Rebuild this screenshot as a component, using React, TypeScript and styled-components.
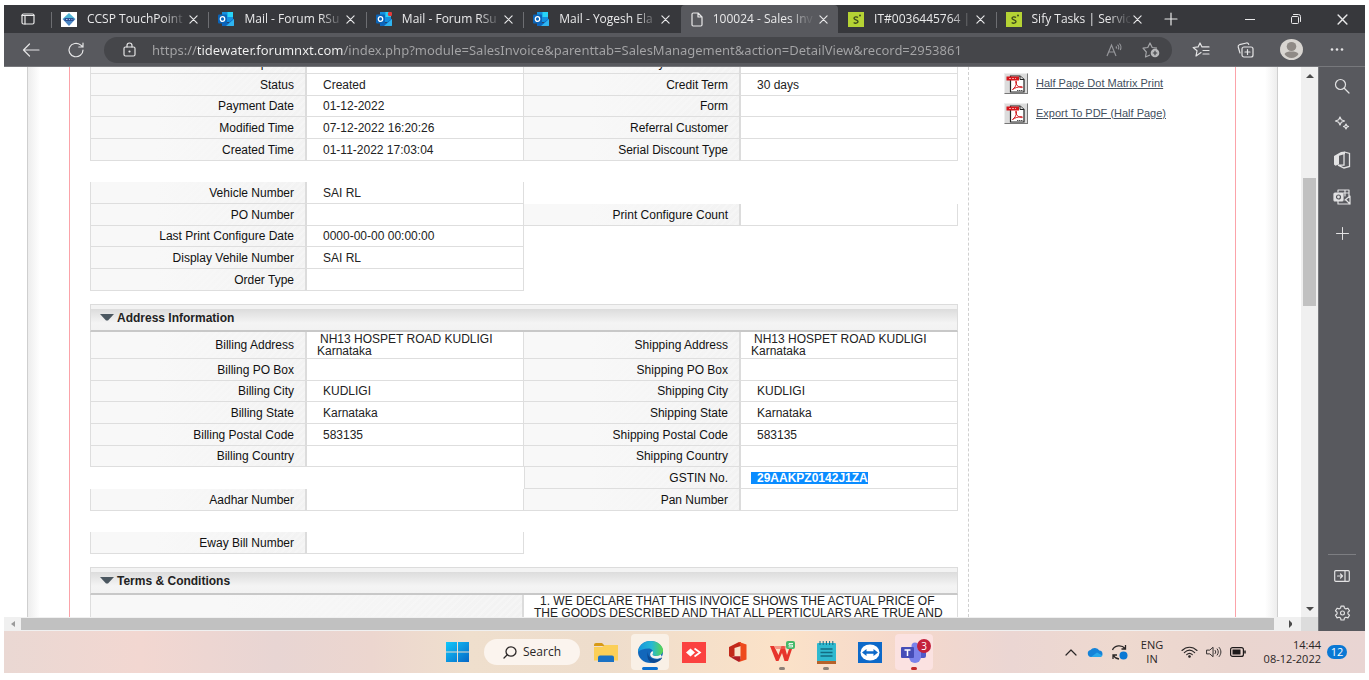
import React from "react";
import styled, { createGlobalStyle, css } from "styled-components";

const GlobalStyle = createGlobalStyle`
  * { box-sizing: border-box; }
  body { margin: 0; background: #fff; font-family: "Liberation Sans", Arial, sans-serif; }
  button { border: 0; padding: 0; background: none; color: inherit; font: inherit; }
`;

const uiFont = `"Open Sans", "Noto Sans", sans-serif`;

/* ---------- window shell ---------- */

const Desktop = styled.div`
  height: 100vh;
  padding: 5px 4px 7px;
  display: flex;
  flex-direction: column;
`;

const Center = css`
  display: flex;
  align-items: center;
  justify-content: center;
`;

const TitleBar = styled.header`
  flex: 0 0 28px;
  display: flex;
  background: #37383c;
  color: #e9e9ea;
  font: 12px/20px ${uiFont};
`;

const TabActions = styled.button`
  flex: 0 0 47px;
  ${Center}
`;

const Tabs = styled.nav`
  flex: 0 1 1102px;
  min-width: 0;
  display: flex;
`;

const Tab = styled.div<{ $active?: boolean; $quiet?: boolean }>`
  flex: 1 1 0;
  min-width: 0;
  display: flex;
  align-items: center;
  gap: 10px;
  padding: 0 9px 0 10px;
  position: relative;
  border-radius: 4px 4px 0 0;
  background: ${(p) => (p.$active ? "#58595e" : "transparent")};
  &::before {
    content: "";
    position: absolute;
    left: 0;
    top: 7px;
    height: 16px;
    width: 1px;
    background: ${(p) => (p.$active || p.$quiet ? "transparent" : "#6d6e72")};
  }
`;

const TabTitle = styled.span`
  flex: 1;
  min-width: 0;
  margin-right: -8px;
  overflow: hidden;
  white-space: nowrap;
  mask-image: linear-gradient(to right, #000 76px, rgba(0, 0, 0, 0.15) 96px);
`;

const TabClose = styled.button`
  flex: 0 0 12px;
  height: 20px;
  ${Center}
`;

const NewTab = styled.button`
  flex: 0 0 35px;
  ${Center}
`;

const WindowButtons = styled.div`
  margin-left: auto;
  display: flex;
`;

const WindowButton = styled.button`
  width: 46px;
  ${Center}
`;

const Toolbar = styled.div`
  flex: 0 0 34px;
  display: flex;
  align-items: center;
  padding-right: 12px;
  background: #58595e;
  color: #e4e4e5;
  border-bottom: 1px solid #77787c;
`;

const ToolButton = styled.button<{ $w?: number }>`
  width: ${(p) => p.$w ?? 45}px;
  height: 28px;
  ${Center}
`;

const AddressBar = styled.div`
  flex: 1;
  min-width: 0;
  height: 26px;
  margin-left: 10px;
  padding: 0 3px 0 18px;
  border-radius: 13px;
  background: #45464a;
  display: flex;
  align-items: center;
`;

const UrlInput = styled.input`
  flex: 1;
  min-width: 0;
  height: 24px;
  margin-left: 15px;
  padding: 0;
  border: 0;
  outline: 0;
  font: 13px/24px "Noto Sans", "Open Sans", sans-serif;
  background: linear-gradient(to right, #a5a5a7 46px, #f4f4f4 46px, #f4f4f4 192px, #a5a5a7 192px);
  background-clip: text;
  -webkit-background-clip: text;
  -webkit-text-fill-color: transparent;
`;

const Browser = styled.div`
  flex: 1;
  min-height: 0;
  display: flex;
`;

const Frame = styled.div`
  flex: 1;
  min-width: 0;
  display: flex;
  flex-direction: column;
`;

const FrameBody = styled.div`
  flex: 1;
  min-height: 0;
  display: flex;
`;

const Viewport = styled.main`
  flex: 1;
  min-width: 0;
  overflow: hidden;
  padding: 0 23px;
  background: #fff;
`;

/* ---------- scrollbars ---------- */

const VTrack = styled.div`
  flex: 0 0 17px;
  background: #f0f0f0;
  display: flex;
  flex-direction: column;
  align-items: center;
`;

const VThumb = styled.div`
  width: 13px;
  height: 128px;
  margin-top: 94px;
  background: #c1c1c1;
`;

const HTrack = styled.div`
  flex: 0 0 14px;
  display: flex;
  align-items: center;
  background: #f0f0f0;
`;

const HThumb = styled.div`
  flex: 1;
  height: 12px;
  background: #c1c1c1;
`;

const ScrollArrow = styled.button<{ $w: number; $h: number; $end?: boolean }>`
  width: ${(p) => p.$w}px;
  height: ${(p) => p.$h}px;
  margin-top: ${(p) => (p.$end ? "auto" : "0")};
  ${Center}
`;

const Corner = styled.div`
  width: 17px;
  height: 14px;
  background: #dcdcdc;
`;

/* ---------- edge sidebar ---------- */

const SideRail = styled.aside`
  flex: 0 0 47px;
  border-left: 1px solid #77787c;
  background: #58595e;
  color: #e2e2e3;
  display: flex;
  flex-direction: column;
  align-items: center;
`;

const RailButton = styled.button`
  width: 36px;
  height: 37px;
  ${Center}
`;

const RailDivider = styled.hr`
  width: 28px;
  margin: auto 0 2px;
  border: 0;
  border-top: 1px solid #7d7e82;
`;

/* ---------- invoice page ---------- */

const Sheet = styled.div`
  height: 100%;
  border-left: 1px solid #cfcfcf;
  border-right: 1px solid #cfcfcf;
  padding: 0 41px;
  background:
    linear-gradient(to right, #ededed, #fff) left / 12px 100% no-repeat,
    linear-gradient(to left, #ededed, #fff) right / 12px 100% no-repeat;
`;

const Inner = styled.div`
  height: 100%;
  display: flex;
  border-left: 1px solid #fba3a9;
  border-right: 1px solid #fba3a9;
`;

const Details = styled.div`
  flex: 1;
  min-width: 0;
  height: 100%;
  overflow: hidden;
  padding: 0 10px 0 20px;
  border-right: 1px dashed #cfcfcf;
`;

const Scrolled = styled.div`
  margin-top: -15px;
`;

const Actions = styled.div`
  flex: 0 0 266px;
  padding: 6px 0 0 35px;
  display: flex;
  flex-direction: column;
  gap: 9px;
`;

const ActionRow = styled.div`
  display: flex;
  align-items: center;
  gap: 8px;
  height: 21px;
`;

const PdfButton = styled.button`
  width: 24px;
  height: 21px;
  background: #dcdcdc;
  border: 1px solid #eee;
  border-right-color: #777;
  border-bottom-color: #777;
  ${Center}
`;

const ActionLink = styled.a`
  padding-bottom: 2px;
  font-size: 11px;
  line-height: 14px;
  color: #44505e;
  text-decoration: underline;
`;

const Block = styled.table`
  width: 100%;
  table-layout: fixed;
  border-collapse: separate;
  border-spacing: 0;
  font-size: 12px;
  line-height: 12px;
  color: #222;
`;

const LabelCol = styled.col`
  width: calc(25% + 1px);
`;

const ValueCol = styled.col`
  width: calc(25% - 1px);
`;

const BlockRow = styled.tr<{ $tall?: boolean }>`
  height: ${(p) => (p.$tall ? 27 : 22)}px;
  &:nth-child(3n) {
    height: 21px;
  }
`;

const LabelCell = styled.th<{ $first?: boolean }>`
  padding: 0 11px 0 0;
  text-align: right;
  font-weight: normal;
  color: #111;
  border-bottom: 1px solid #dedede;
  border-right: 2px solid #dcdcdc;
  border-left: ${(p) => (p.$first ? "1px solid #dedede" : "0")};
  background:
    linear-gradient(to right, #f8f8f8 30%, rgba(246, 246, 246, 0.6)),
    repeating-linear-gradient(135deg, #ededed 0 3px, #f4f4f4 3px 5px);
`;

const ValueCell = styled.td<{ $inline?: boolean }>`
  padding: 0 10px;
  border-bottom: 1px solid #dedede;
  border-right: 1px solid #dedede;
  text-indent: ${(p) => (p.$inline ? 3 : 6)}px;
  &:has(strong) {
    text-indent: 0;
  }
`;

const BlankCell = styled.td`
  padding: 0;
`;

const Selected = styled.strong`
  display: inline-block;
  text-indent: 6px;
  color: #fff;
  background: #0a8cff;
`;

const SectionHead = styled.h2`
  height: 28px;
  margin: 13px 0 0;
  padding: 0 0 0 9px;
  display: flex;
  align-items: center;
  gap: 3px;
  font-size: 12px;
  line-height: 14px;
  color: #222;
  border: 1px solid #dcdcdc;
  border-bottom: 2px solid #c8c8c8;
  background: linear-gradient(#f3f3f3 4px, #dcdcdc 4px, #f4f4f4 18px, #f2f2f2);
`;

/* ---------- taskbar ---------- */

const Taskbar = styled.footer`
  flex: 0 0 42px;
  display: grid;
  grid-template-columns: 1fr auto 1fr;
  align-items: center;
  color: #2a2626;
  font: 11px/14px ${uiFont};
  background: linear-gradient(
    to right,
    #ead8d3 0%,
    #f2d7d1 10%,
    #e8d5d3 20%,
    #ecd6cf 27%,
    #efdfcd 34%,
    #eeddcc 44%,
    #fbe2c8 57%,
    #f5d8cb 66%,
    #ebd6d3 74%,
    #eed9cf 82%,
    #ead5cf 90%,
    #e9d5d3 100%
  );
`;

const Launcher = styled.div`
  grid-column: 2;
  padding-left: 2px;
  display: flex;
  align-items: center;
`;

const TaskButton = styled.button<{ $bg?: string; $mark?: string; $wide?: boolean }>`
  width: 38px;
  height: 36px;
  margin: 0 3px;
  position: relative;
  border-radius: 4px;
  background: ${(p) => p.$bg ?? "transparent"};
  ${Center}
  &::after {
    content: "";
    position: absolute;
    bottom: 0;
    left: 50%;
    width: ${(p) => (p.$wide ? 16 : 6)}px;
    height: 3px;
    border-radius: 2px;
    transform: translateX(-50%);
    background: ${(p) => p.$mark ?? "transparent"};
  }
`;

const SearchPill = styled.button`
  width: 96px;
  height: 26px;
  margin: 0 4px 0 5px;
  gap: 6px;
  border-radius: 13px;
  background: #fbf4ee;
  font-size: 12px;
  ${Center}
`;

const Count = styled.span`
  position: absolute;
  top: 5px;
  right: 2px;
  width: 14px;
  height: 14px;
  border-radius: 7px;
  background: #c4213c;
  color: #fff;
  font-size: 10px;
  ${Center}
`;

const Tray = styled.div`
  justify-self: end;
  grid-column: 3;
  display: flex;
  align-items: center;
  margin-right: 18px;
`;

const TrayButton = styled.button<{ $w?: number }>`
  width: ${(p) => p.$w ?? 24}px;
  height: 28px;
  ${Center}
`;

const Clock = styled.time`
  width: 67px;
  text-align: right;
`;

const Notice = styled.span`
  width: 20px;
  height: 14px;
  margin-left: 6px;
  border-radius: 7px;
  background: #0a78d4;
  color: #fff;
  ${Center}
`;

/* ---------- drawings ---------- */

const Line = ({ w = 18, h = w, vb = "0 0 20 20", s = 1.2, children }: any) => (
  <svg width={w} height={h} viewBox={vb} fill="none" stroke="currentColor" strokeWidth={s} strokeLinecap="round" strokeLinejoin="round" aria-hidden>
    {children}
  </svg>
);

const Cross = ({ size = 9 }: { size?: number }) => (
  <Line w={size} vb="0 0 10 10" s={1.3}><path d="M1 1l8 8M9 1l-8 8" /></Line>
);

const OutlookIcon = ({ dot }: { dot?: boolean }) => (
  <svg width="16" height="14" viewBox="0 0 16 14" aria-hidden>
    <rect x="4" y="0" width="11" height="10" fill="#1490df" />
    <path d="M9.500 0H15v5H9.500z" fill="#28d4f8" />
    <path d="M4 7l6 4 6-4.500V14H4z" fill="#0d65bd" />
    <path d="M8 14l8-7v6.500l-.5.5z" fill="#2fb4f0" />
    <rect x="0" y="2.500" width="9" height="9" rx="1" fill="#0a64b8" />
    <ellipse cx="4.500" cy="7" rx="2.200" ry="2.400" fill="none" stroke="#fff" strokeWidth="1.300" />
    {dot && <circle cx="14" cy="2" r="2.200" fill="#e23b3b" />}
  </svg>
);

const SifyIcon = () => (
  <svg width="16" height="15" viewBox="0 0 16 15" aria-hidden>
    <rect width="16" height="15" fill="#b5d334" />
    <path d="M10 5.500C9 4.600 6 4.500 6 6.300c0 1.900 4 1.200 4 3.300 0 2-3.200 1.900-4.300.9" fill="none" stroke="#3d4a1d" strokeWidth="1.400" />
    <circle cx="12" cy="3.500" r="1" fill="#3d4a1d" />
  </svg>
);

const CcspIcon = () => (
  <svg width="16" height="15" viewBox="0 0 16 15" aria-hidden>
    <rect width="16" height="15" fill="#fff" />
    <path d="M8 1l6.500 6H1.500z" fill="#4db3d3" />
    <path d="M8 14L1.500 7h13z" fill="#4a86c4" />
    <path d="M3.500 7.500h9" stroke="#2b4f94" strokeWidth="3" />
    <path d="M5 7.500h1.500M8 7.500h1M10.500 7.500h.8" stroke="#a9c5e8" strokeWidth="1" />
  </svg>
);

const PageIcon = () => (
  <Line w={12} h={15} vb="0 0 12 15" s={1.2}><path d="M1 2.200C1 1.500 1.500 1 2.200 1H7l4 4v7.800c0 .7-.5 1.200-1.200 1.200H2.200C1.500 14 1 13.500 1 12.800zM7 1v4h4" /></Line>
);

const PdfIcon = () => (
  <svg width="20" height="18" viewBox="0 0 20 18" aria-hidden>
    <path d="M4.500 1H14l4 3.500V17H4.500z" fill="#fff" stroke="#222" strokeWidth="1.200" />
    <path d="M14 1v3.500h4" fill="#ddd" stroke="#222" />
    <rect x="0.500" y="1.500" width="12.500" height="4" fill="#d5161c" />
    <path d="M3 3.500h7" stroke="#f5a4a4" strokeDasharray="2 1" />
    <path d="M6.500 14.500c2-1 4.500-5 4-8-.2-.7-.9-.6-.9.1 0 3 3.200 6 6.200 6 .9 0 .8-1-.2-1-3 0-7 1.300-9.100 2.900" fill="none" stroke="#d5161c" />
    <path d="M11 15.500h6" stroke="#555" strokeDasharray="1.500 .5" />
  </svg>
);

const Triangle = () => (
  <svg width="14" height="7" viewBox="0 0 14 7" aria-hidden><path d="M0 0h14L8 6.500H6z" fill="#4b5760" /></svg>
);

const Arrow = ({ d, dim }: { d: string; dim?: boolean }) => (
  <svg width="8" height="8" viewBox="0 0 8 8" aria-hidden><path d={d} fill={dim ? "#9a9a9a" : "#4c4c4c"} /></svg>
);

/* ---------- data ---------- */

type Pair = [string, React.ReactNode] | null;
type RowData = { left: Pair; right: Pair; tall?: boolean };

const summary: RowData[] = [
  { left: ["Shipment", ""], right: ["Delivery Information", ""] },
  { left: ["Status", "Created"], right: ["Credit Term", "30 days"] },
  { left: ["Payment Date", "01-12-2022"], right: ["Form", ""] },
  { left: ["Modified Time", "07-12-2022 16:20:26"], right: ["Referral Customer", ""] },
  { left: ["Created Time", "01-11-2022 17:03:04"], right: ["Serial Discount Type", ""] },
  { left: null, right: null },
  { left: ["Vehicle Number", "SAI RL"], right: null },
  { left: ["PO Number", ""], right: ["Print Configure Count", ""] },
  { left: ["Last Print Configure Date", "0000-00-00 00:00:00"], right: null },
  { left: ["Display Vehile Number", "SAI RL"], right: null },
  { left: ["Order Type", ""], right: null },
];

const place = <>NH13 HOSPET ROAD KUDLIGI<br />Karnataka</>;

const address: RowData[] = [
  { left: ["Billing Address", place], right: ["Shipping Address", place], tall: true },
  { left: ["Billing PO Box", ""], right: ["Shipping PO Box", ""] },
  { left: ["Billing City", "KUDLIGI"], right: ["Shipping City", "KUDLIGI"] },
  { left: ["Billing State", "Karnataka"], right: ["Shipping State", "Karnataka"] },
  { left: ["Billing Postal Code", "583135"], right: ["Shipping Postal Code", "583135"] },
  { left: ["Billing Country", ""], right: ["Shipping Country", ""] },
  { left: null, right: ["GSTIN No.", <Selected>29AAKPZ0142J1ZA</Selected>] },
  { left: ["Aadhar Number", ""], right: ["Pan Number", ""] },
  { left: null, right: null },
  { left: ["Eway Bill Number", ""], right: null },
];

const tabs = [
  { icon: <CcspIcon />, title: "CCSP TouchPoint" },
  { icon: <OutlookIcon />, title: "Mail - Forum RSu" },
  { icon: <OutlookIcon dot />, title: "Mail - Forum RSu" },
  { icon: <OutlookIcon />, title: "Mail - Yogesh Ela" },
  { icon: <PageIcon />, title: "100024 - Sales Inv", active: true },
  { icon: <SifyIcon />, title: "IT#0036445764 |", quiet: true },
  { icon: <SifyIcon />, title: "Sify Tasks | Servic" },
];

const Cells = ({ pair, first, tall }: { pair: Pair; first?: boolean; tall?: boolean }) =>
  pair ? (
    <>
      <LabelCell scope="row" $first={first}>{pair[0]}</LabelCell>
      <ValueCell $inline={tall}>{pair[1]}</ValueCell>
    </>
  ) : (
    <BlankCell colSpan={2} />
  );

const DetailBlock = ({ rows }: { rows: RowData[] }) => (
  <Block>
    <colgroup><LabelCol /><ValueCol /><LabelCol /><ValueCol /></colgroup>
    <tbody>
      {rows.map((r, i) => (
        <BlockRow key={i} $tall={r.tall}>
          <Cells pair={r.left} first tall={r.tall} />
          <Cells pair={r.right} first={!r.left} tall={r.tall} />
        </BlockRow>
      ))}
    </tbody>
  </Block>
);

export default function App() {
  return (
    <>
      <GlobalStyle />
      <Desktop>
        <TitleBar>
          <TabActions aria-label="Tab actions">
            <Line w={14} h={12} vb="0 0 14 12"><rect x="1" y="1" width="12" height="10" rx="1.500" /><path d="M1 2.500h12M4 3v8" /></Line>
          </TabActions>
          <Tabs>
            {tabs.map((t, i) => (
              <Tab key={i} $active={t.active} $quiet={t.quiet}>
                {t.icon}
                <TabTitle>{t.title}</TabTitle>
                <TabClose aria-label="Close tab"><Cross /></TabClose>
              </Tab>
            ))}
          </Tabs>
          <NewTab aria-label="New tab"><Line w={14} vb="0 0 14 14"><path d="M7 1v12M1 7h12" /></Line></NewTab>
          <WindowButtons>
            <WindowButton aria-label="Minimise"><Line w={10} vb="0 0 10 10" s={1}><path d="M0 5.500h10" /></Line></WindowButton>
            <WindowButton aria-label="Restore"><Line w={10} vb="0 0 10 10" s={1}><rect x=".5" y="2.500" width="7" height="7" rx="1" /><path d="M2.500.5h5a2 2 0 0 1 2 2v5" /></Line></WindowButton>
            <WindowButton aria-label="Close"><Cross size={11} /></WindowButton>
          </WindowButtons>
        </TitleBar>

        <Toolbar>
          <ToolButton $w={54} aria-label="Back"><Line w={18} h={14} vb="0 0 18 14"><path d="M17 7H1.500M7.500 1L1.500 7l6 6" /></Line></ToolButton>
          <ToolButton $w={36} aria-label="Refresh"><Line w={18} h={16} vb="0 0 18 16"><path d="M16 8a7 6.700 0 1 1-2.500-5.100L16 5M16 1v4h-4.200" /></Line></ToolButton>
          <AddressBar>
            <Line w={15} h={15} vb="0 0 14 15"><rect x="1.500" y="5" width="11" height="9" rx="1.500" /><path d="M4.500 5V3.500a2.500 2.500 0 0 1 5 0V5" /><circle cx="7" cy="9.500" r=".5" /></Line>
            <UrlInput
              aria-label="Address"
              defaultValue="https://tidewater.forumnxt.com/index.php?module=SalesInvoice&parenttab=SalesManagement&action=DetailView&record=2953861"
            />
            <ToolButton $w={36} aria-label="Read aloud">
              <svg width="18" height="14" viewBox="0 0 18 14" fill="none" stroke="#95969a" strokeWidth="1.200" aria-hidden><path d="M1 13L5.500 2 10 13M2.700 9h5.600M10 3.300c.7.700.7 1.400 0 2.200M11.500 1.800c1.500 1.200 1.500 3.400.6 4.600M13.300.6c1.900 1.500 1.900 4.500 1 6.300" /></svg>
            </ToolButton>
            <ToolButton $w={36} aria-label="Add to favourites">
              <svg width="18" height="16" viewBox="0 0 18 16" fill="none" stroke="#a5a6a9" strokeWidth="1.200" strokeLinejoin="round" aria-hidden><path d="M8 13l-4.500 2 .8-5L1 6.200l4.800-.7L8 1l2.200 4.500 4.800.7" /><circle cx="13" cy="11" r="4.300" fill="#b9babc" stroke="none" /><path d="M10.800 11h4.400M13 8.800v4.400" stroke="#45464a" /></svg>
            </ToolButton>
          </AddressBar>
          <ToolButton $w={57} aria-label="Favourites"><Line w={18} h={15} vb="0 0 18 15"><path d="M9 10.500L4 14l1-5.200L1.200 5.500l4.900-.6L8 1l2 3.900h7M11 8.500h6M11 12h6" /></Line></ToolButton>
          <ToolButton $w={32} aria-label="Collections"><Line w={17} h={16} vb="0 0 17 16"><rect x="5" y="5" width="11" height="10" rx="2" /><path d="M10.500 7.500v5M8 10h5M3 11L1.200 5C1 3.800 1.500 3 2.500 2.700L9.500 1c1-.2 2 .3 2.200 1.500" /></Line></ToolButton>
          <ToolButton $w={60} aria-label="Profile">
            <svg width="23" height="21" viewBox="0 0 23 21" aria-hidden><ellipse cx="11.500" cy="10.500" rx="11.500" ry="10.500" fill="#d8d5d1" /><ellipse cx="11.500" cy="7.500" rx="4.800" ry="4.500" fill="#8f8a86" /><path d="M4.500 15c1-2 4-2.500 7-2.500s6 .5 7 2.500c-1 2-4 4-7 4s-6-2-7-4z" fill="#8f8a86" /></svg>
          </ToolButton>
          <ToolButton $w={32} aria-label="More"><svg width="14" height="3" viewBox="0 0 14 3" fill="currentColor" aria-hidden><circle cx="2" cy="1.500" r="1.300" /><circle cx="7" cy="1.500" r="1.300" /><circle cx="12" cy="1.500" r="1.300" /></svg></ToolButton>
        </Toolbar>

        <Browser>
          <Frame>
            <FrameBody>
              <Viewport>
                <Sheet>
                  <Inner>
                    <Details>
                      <Scrolled>
                        <DetailBlock rows={summary} />
                        <SectionHead><Triangle />Address Information</SectionHead>
                        <DetailBlock rows={address} />
                        <SectionHead><Triangle />Terms &amp; Conditions</SectionHead>
                        <Block>
                          <tbody>
                            <tr>
                              <LabelCell scope="row" $first aria-label="Terms" />
                              <ValueCell>
                                1. WE DECLARE THAT THIS INVOICE SHOWS THE ACTUAL PRICE OF<br />
                                THE GOODS DESCRIBED AND THAT ALL PERTICULARS ARE TRUE AND
                              </ValueCell>
                            </tr>
                          </tbody>
                        </Block>
                      </Scrolled>
                    </Details>
                    <Actions>
                      <ActionRow><PdfButton aria-label="Half page PDF"><PdfIcon /></PdfButton><ActionLink href="#print">Half Page Dot Matrix Print</ActionLink></ActionRow>
                      <ActionRow><PdfButton aria-label="Export PDF"><PdfIcon /></PdfButton><ActionLink href="#export">Export To PDF (Half Page)</ActionLink></ActionRow>
                    </Actions>
                  </Inner>
                </Sheet>
              </Viewport>
              <VTrack>
                <ScrollArrow $w={17} $h={17} aria-label="Scroll up"><Arrow d="M0 6l4-4 4 4z" /></ScrollArrow>
                <VThumb />
                <ScrollArrow $w={17} $h={17} $end aria-label="Scroll down"><Arrow d="M0 2l4 4 4-4z" /></ScrollArrow>
              </VTrack>
            </FrameBody>
            <HTrack>
              <ScrollArrow $w={17} $h={14} aria-label="Scroll left"><Arrow d="M6 1v6L2 4z" dim /></ScrollArrow>
              <HThumb />
              <ScrollArrow $w={27} $h={14} aria-label="Scroll right"><Arrow d="M5 0v8l4-4z" /></ScrollArrow>
              <Corner />
            </HTrack>
          </Frame>
          <SideRail>
            <RailButton aria-label="Search"><Line w={16} vb="0 0 16 16"><circle cx="6.500" cy="6.500" r="5" /><path d="M10.500 10.500L15 15" /></Line></RailButton>
            <RailButton aria-label="Discover"><Line w={16} vb="0 0 16 16"><path d="M6 2l1.300 2.700L10.500 6 7.300 7.300 6 10 4.700 7.300 1.500 6l3.200-1.300zM12 9l.8 1.700 1.700.8-1.700.8L12 14l-.8-1.700-1.700-.8 1.700-.8z" /></Line></RailButton>
            <RailButton aria-label="Office"><svg width="18" height="18" viewBox="0 0 18 18" aria-hidden><path d="M1 5l7-4 4-.5V3L6 4.800v8.500l-3.500 1.500L1 13.500z" fill="#e2e2e3" /><path d="M11.500 1L16.500 2.500v13L11 17l-6-2.800h6V2" fill="none" stroke="#e2e2e3" strokeWidth="1.300" /></svg></RailButton>
            <RailButton aria-label="Outlook"><Line w={18} h={16} vb="0 0 18 16"><path d="M5 3V1h11v6M5 12v3h12V7l-5 4M10 4h6M12 1v6M13 11l4 4" /><rect x="1" y="4" width="9" height="8" rx="1" fill="#e2e2e3" /><circle cx="5.500" cy="8" r="2" stroke="#58595e" /></Line></RailButton>
            <RailButton aria-label="Add"><Line w={13} vb="0 0 13 13" s={1}><path d="M6.500 .5v12M.5 6.500h12" /></Line></RailButton>
            <RailDivider />
            <RailButton aria-label="Hide sidebar"><Line w={16} h={12} vb="0 0 16 12"><rect x=".7" y=".7" width="14.600" height="10.600" rx="1" /><path d="M11 1v10M3.500 6h5M6.500 4l2 2-2 2" /></Line></RailButton>
            <RailButton aria-label="Settings"><Line w={17} h={16} vb="0 0 18 18" s={1.3}><circle cx="9" cy="9" r="2.200" /><path d="M7.300 1.200h3.400l.5 2.300 1.600.9 2.300-.8 1.800 3-1.800 1.500v1.900l1.800 1.500-1.800 3-2.300-.8-1.600.9-.5 2.300H7.300l-.5-2.300-1.600-.9-2.300.8-1.800-3L2.900 10V8.100L1.100 6.600l1.800-3 2.300.8 1.600-.9z" /></Line></RailButton>
          </SideRail>
        </Browser>

        <Taskbar>
          <Launcher>
            <TaskButton aria-label="Start">
              <svg width="23" height="20" viewBox="0 0 23 20" aria-hidden><defs><linearGradient id="win" x1="0" y1="0" x2="1" y2="1"><stop offset="0" stopColor="#10c8fb" /><stop offset="1" stopColor="#0767c6" /></linearGradient></defs><path d="M0 0h11v9.500H0zM12 0h11v9.500H12zM0 10.500h11V20H0zM12 10.500h11V20H12z" fill="url(#win)" /></svg>
            </TaskButton>
            <SearchPill><Line w={14} h={13} vb="0 0 14 13" s={1.3}><ellipse cx="8" cy="5.500" rx="5" ry="4.700" /><path d="M4.300 8.800L1 12" /></Line>Search</SearchPill>
            <TaskButton aria-label="File Explorer">
              <svg width="25" height="19" viewBox="0 0 25 19" aria-hidden><path d="M0 2a2 2 0 0 1 2-2h6l3 3H0z" fill="#d79a17" /><path d="M0 4h8l3-2h13v15.500H0z" fill="#fbcf57" /><path d="M4 19v-4.500a2 2 0 0 1 2-2h12a2 2 0 0 1 2 2V19z" fill="#1a72c4" /></svg>
            </TaskButton>
            <TaskButton $bg="#f9f0e6" $mark="#0a6fd0" $wide aria-label="Edge">
              <svg width="25" height="22" viewBox="0 0 25 22" aria-hidden><defs><linearGradient id="edge" x1="0" y1="0" x2="1" y2="0"><stop offset="0" stopColor="#1495dc" /><stop offset=".55" stopColor="#27b8d4" /><stop offset="1" stopColor="#5ad64c" /></linearGradient></defs><ellipse cx="12.500" cy="11" rx="12.500" ry="11" fill="#1267bb" /><path d="M0 11C.5 4.500 6 0 12.500 0 20 0 25 5 25 9.500c0 3.500-3 5.500-6.500 5.500-3 0-4.500-1-4-2 1.500-3-.5-5.500-4-5.500C6 7.500 2 9 0 11z" fill="url(#edge)" /><path d="M10 10c-1 4 2 8.500 8 8.500 2.500 0 4.500-.9 5.500-1.800.4-.3.800.2.500.6C22 20 19 22 16 22c-5 0-8-5-6-12z" fill="#0c4a93" /><path d="M14.500 10c1.500 2-.5 3.200.2 4 1 1.300 5.300 1.800 8-.5L24 16c-3 2.500-9.500 2.500-11.500-1-1-1.800 0-4 2-5z" fill="#f6f3ef" /></svg>
            </TaskButton>
            <TaskButton aria-label="AnyDesk">
              <svg width="24" height="21" viewBox="0 0 24 21" aria-hidden><rect width="24" height="21" fill="#fb4240" /><path d="M4 10.500L8.500 6.500l4.500 4-4.500 4z" fill="#fff" /><path d="M12.500 6.500l5.500 4-5.500 4" fill="none" stroke="#fff" strokeWidth="1.700" /></svg>
            </TaskButton>
            <TaskButton aria-label="Office">
              <svg width="18" height="20" viewBox="0 0 18 20" aria-hidden><path d="M0 5l10-5 2 .3V4L5.500 6v8L2 15.500 0 14z" fill="#c2281a" /><path d="M10 0l7.500 2.500v15L10 20l1.500-3V3.500z" fill="#ee4a1d" /><path d="M2 15.500l3.500-1.300h6V18L10 20z" fill="#b01d24" /></svg>
            </TaskButton>
            <TaskButton $mark="#8c8178" aria-label="WPS Office">
              <svg width="27" height="22" viewBox="0 0 27 22" aria-hidden><path d="M1 5h4l4.500 9 3-9h3l2.500 9 3-9h3l-5 15h-3.500L13 12l-3.500 8H7z" fill="#e7352c" /><path d="M5 5h13l-2 3H7z" fill="#f4665a" opacity=".6" /><rect x="17" y="0" width="9" height="8" rx="2" fill="#45b96a" /><path d="M24 2.500h-4v1.700h3.500v1.700H19.500" fill="none" stroke="#fff" strokeWidth=".9" /></svg>
            </TaskButton>
            <TaskButton $mark="#8c8178" aria-label="Notepad">
              <svg width="19" height="23" viewBox="0 0 19 23" aria-hidden><rect x="0" y="2" width="19" height="19" rx="1" fill="#2fb9cf" /><path d="M3 0v4M6.200 0v4M9.400 0v4M12.600 0v4M15.800 0v4" stroke="#176b84" /><path d="M3.500 8h12M3.500 11.500h12M3.500 15h12" stroke="#136c82" strokeWidth="1.500" /><rect y="20" width="19" height="3" fill="#b5622b" /></svg>
            </TaskButton>
            <TaskButton aria-label="TeamViewer">
              <svg width="24" height="21" viewBox="0 0 24 21" aria-hidden><rect width="24" height="21" fill="#0d69c9" /><ellipse cx="12" cy="10.500" rx="9.500" ry="8" fill="#fff" /><path d="M4 10.500L8.500 7v2.300h7V7l4.500 3.500-4.500 3.500v-2.300h-7V14z" fill="#0d69c9" /></svg>
            </TaskButton>
            <TaskButton $bg="#fbe2e1" $mark="#c42b2b" aria-label="Teams">
              <svg width="27" height="21" viewBox="0 0 27 21" aria-hidden><circle cx="14" cy="4" r="3.500" fill="#7b83eb" /><rect x="17" y="7" width="8" height="9" rx="2" fill="#5059c9" /><path d="M8 7h12v8a6 6 0 0 1-12 0z" fill="#7b83eb" /><rect y="5" width="13" height="11" rx="1" fill="#464eb8" /><path d="M3.500 8h6M6.500 8v6" stroke="#fff" strokeWidth="1.500" /></svg>
              <Count>3</Count>
            </TaskButton>
          </Launcher>
          <Tray>
            <TrayButton aria-label="Hidden icons"><Line w={12} h={7} vb="0 0 12 7"><path d="M1 6l5-5 5 5" /></Line></TrayButton>
            <TrayButton aria-label="OneDrive"><svg width="16" height="10" viewBox="0 0 16 10" aria-hidden><path d="M4 10a3.500 3.500 0 0 1-.5-6.900A5 4.500 0 0 1 12.300 3.500 3.300 3.300 0 0 1 13 10z" fill="#1583d8" /><path d="M4 10l6-4.500 5.500 3a3 2.500 0 0 1-2.500 1.500z" fill="#28a8ea" /></svg></TrayButton>
            <TrayButton aria-label="Sync"><svg width="17" height="16" viewBox="0 0 17 16" fill="none" stroke="#2a2626" strokeWidth="1.300" aria-hidden><path d="M1.500 6A7 6 0 0 1 14 4.500M14.500 1v4h-4M2 15v-4h4M2.500 11.500A7 6 0 0 0 8 15" /><circle cx="12.500" cy="11.500" r="4" fill="#0a78d4" stroke="none" /></svg></TrayButton>
            <TrayButton $w={42}>ENG<br />IN</TrayButton>
            <TrayButton $w={33} aria-label="Wi-Fi"><Line w={17} h={12} vb="0 0 17 12" s={1.1}><path d="M1 4.500c4.500-4.300 10.500-4.300 15 0M3.300 6.600c3.200-3 7.200-3 10.400 0M5.700 8.700c1.800-1.700 3.800-1.700 5.600 0" /><circle cx="8.500" cy="10.500" r=".8" fill="currentColor" /></Line></TrayButton>
            <TrayButton $w={16} aria-label="Volume"><Line w={17} h={12} vb="0 0 17 12" s={1}><path d="M1 4h3l3.500-3v10L4 8H1zM9.700 4.300c.9 1 .9 2.400 0 3.400M11.900 2.700c1.600 1.900 1.600 4.700 0 6.600M14 1.200c2.500 3 2.500 6.600 0 9.600" /></Line></TrayButton>
            <TrayButton $w={32} aria-label="Battery"><svg width="16" height="10" viewBox="0 0 16 10" aria-hidden><rect x=".6" y=".6" width="12.800" height="8.800" rx="2" fill="none" stroke="#1d1a1a" strokeWidth="1.200" /><rect x="2.500" y="2.500" width="8" height="5" fill="#1d1a1a" /><path d="M15 3.500v3" stroke="#1d1a1a" strokeWidth="1.500" /></svg></TrayButton>
            <Clock>14:44<br />08-12-2022</Clock>
            <Notice>12</Notice>
          </Tray>
        </Taskbar>
      </Desktop>
    </>
  );
}
